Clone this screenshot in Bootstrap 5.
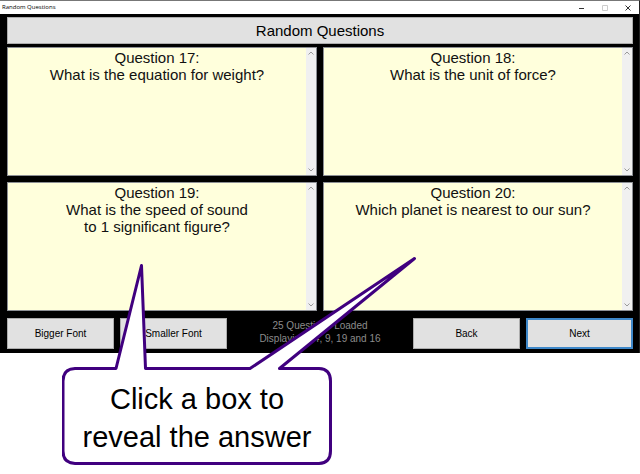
<!DOCTYPE html>
<html lang="en">
<head>
<meta charset="utf-8">
<meta name="viewport" content="width=device-width, initial-scale=1">
<title>Random Questions</title>
<link href="https://cdn.jsdelivr.net/npm/bootstrap@5.3.0/dist/css/bootstrap.min.css" rel="stylesheet">
<style>
body { font-family: "Liberation Sans", Arial, sans-serif; background: #fff; color: #000; overflow: hidden; }
.app-window { background: #000; border-top: 1px solid #777; border-right: 1px solid #222; }
.title-bar { height: 13px; padding-left: 2px; font: 6px/13px "Open Sans", sans-serif; }
.win-btn { width: 23px; height: 13px; }
.win-btn svg { display: block; margin: auto; }
.app-body { padding: 3px 6px 4px 7px; }
.heading-bar { height: 27px; font-size: 15px; line-height: 26px; background: #e1e1e1; border: 1px solid #adadad; }
.question-grid { display: grid; grid-template-columns: 1fr 1fr; gap: 6px; margin: 3px 0 7px; }
.question-box { height: 129px; background: #ffffdc; border: 1px solid #8c8f94; }
.question-box textarea { font-size: 15px; line-height: 17px; padding: 1px 0 0; resize: none; overflow: hidden; outline: 0; color: #111; }
.scroll-strip { width: 10px; padding: 3px 0; background: #f0f0f0; }
.button-row { display: grid; grid-template-columns: 107fr 107fr 174fr 107fr 107fr; gap: 6px; }
.tool-btn { height: 31px; padding: 0; font-size: 10px; line-height: 29px; color: #000; background: #e1e1e1; border: 1px solid #adadad; border-radius: 0; }
.tool-btn.chosen { border: 2px solid #3e87c8; line-height: 27px; }
.status-text { font-size: 10px; line-height: 13px; color: #8c8c8c; padding-top: 1px; }
.callout { width: 270px; height: 98px; margin: 14px 0 0 62px; padding-top: 13px; font-size: 29px; line-height: 38px; }
.callout svg { left: 0; bottom: 0; pointer-events: none; }
</style>
<script src="https://cdn.jsdelivr.net/npm/bootstrap@5.3.0/dist/js/bootstrap.bundle.min.js"></script>
</head>
<body>
<main class="app-window">
  <header class="title-bar d-flex bg-white">
    <span class="flex-grow-1">Random Questions</span>
    <button class="win-btn border-0 bg-transparent p-0" aria-label="Minimize"><svg width="6" height="6"><path d="M0 3.5H5" stroke="#333"/></svg></button>
    <button class="win-btn border-0 bg-transparent p-0" aria-label="Maximize" disabled><svg width="6" height="6"><path d="M.5.5h5v5h-5z" fill="none" stroke="#ccc"/></svg></button>
    <button class="win-btn border-0 bg-transparent p-0" aria-label="Close"><svg width="6" height="6"><path d="M.5.5l5 5m0-5l-5 5" stroke="#333"/></svg></button>
  </header>
  <div class="app-body">
    <h1 class="heading-bar text-center fw-normal mb-0">Random Questions</h1>
    <section class="question-grid">
      <div class="question-box d-flex">
        <textarea class="flex-grow-1 w-100 border-0 bg-transparent text-center" aria-label="Question 17" readonly>Question 17:
What is the equation for weight?</textarea>
        <div class="scroll-strip d-flex flex-column justify-content-between align-items-center flex-shrink-0"><svg width="6" height="4"><path d="M.5 3.500l2.500-2.500 2.500 2.500" fill="none" stroke="#999"/></svg><svg width="6" height="4"><path d="M.5.500l2.500 2.500 2.500-2.500" fill="none" stroke="#999"/></svg></div>
      </div>
      <div class="question-box d-flex">
        <textarea class="flex-grow-1 w-100 border-0 bg-transparent text-center" aria-label="Question 18" readonly>Question 18:
What is the unit of force?</textarea>
        <div class="scroll-strip d-flex flex-column justify-content-between align-items-center flex-shrink-0"><svg width="6" height="4"><path d="M.5 3.500l2.500-2.500 2.500 2.500" fill="none" stroke="#999"/></svg><svg width="6" height="4"><path d="M.5.500l2.500 2.500 2.500-2.500" fill="none" stroke="#999"/></svg></div>
      </div>
      <div class="question-box d-flex">
        <textarea class="flex-grow-1 w-100 border-0 bg-transparent text-center" aria-label="Question 19" readonly>Question 19:
What is the speed of sound
to 1 significant figure?</textarea>
        <div class="scroll-strip d-flex flex-column justify-content-between align-items-center flex-shrink-0"><svg width="6" height="4"><path d="M.5 3.500l2.500-2.500 2.500 2.500" fill="none" stroke="#999"/></svg><svg width="6" height="4"><path d="M.5.500l2.500 2.500 2.500-2.500" fill="none" stroke="#999"/></svg></div>
      </div>
      <div class="question-box d-flex">
        <textarea class="flex-grow-1 w-100 border-0 bg-transparent text-center" aria-label="Question 20" readonly>Question 20:
Which planet is nearest to our sun?</textarea>
        <div class="scroll-strip d-flex flex-column justify-content-between align-items-center flex-shrink-0"><svg width="6" height="4"><path d="M.5 3.500l2.500-2.500 2.500 2.500" fill="none" stroke="#999"/></svg><svg width="6" height="4"><path d="M.5.500l2.500 2.500 2.500-2.500" fill="none" stroke="#999"/></svg></div>
      </div>
    </section>
    <div class="button-row">
      <button class="btn tool-btn">Bigger Font</button>
      <button class="btn tool-btn">Smaller Font</button>
      <div class="status-text text-center">25 Questions Loaded<br>Displaying 14, 9, 19 and 16</div>
      <button class="btn tool-btn">Back</button>
      <button class="btn tool-btn chosen">Next</button>
    </div>
  </div>
</main>
<aside class="callout position-relative text-center">
  <svg class="position-absolute" width="360" height="215" viewBox="62 250 360 215" aria-hidden="true">
    <path d="M75 368.500H116L141.500 265.500L145.500 368.500H250L414.500 258.500L279.500 368.500H319Q330.500 369 330.500 381V451Q330.500 463 319 463.500H75Q63 463 63 451V381Q63 369 75 368.500Z" fill="#fff" stroke="#40007f" stroke-width="3" stroke-linejoin="round"/>
  </svg>
  <div class="position-relative">Click a box to<br>reveal the answer</div>
</aside>
</body>
</html>
